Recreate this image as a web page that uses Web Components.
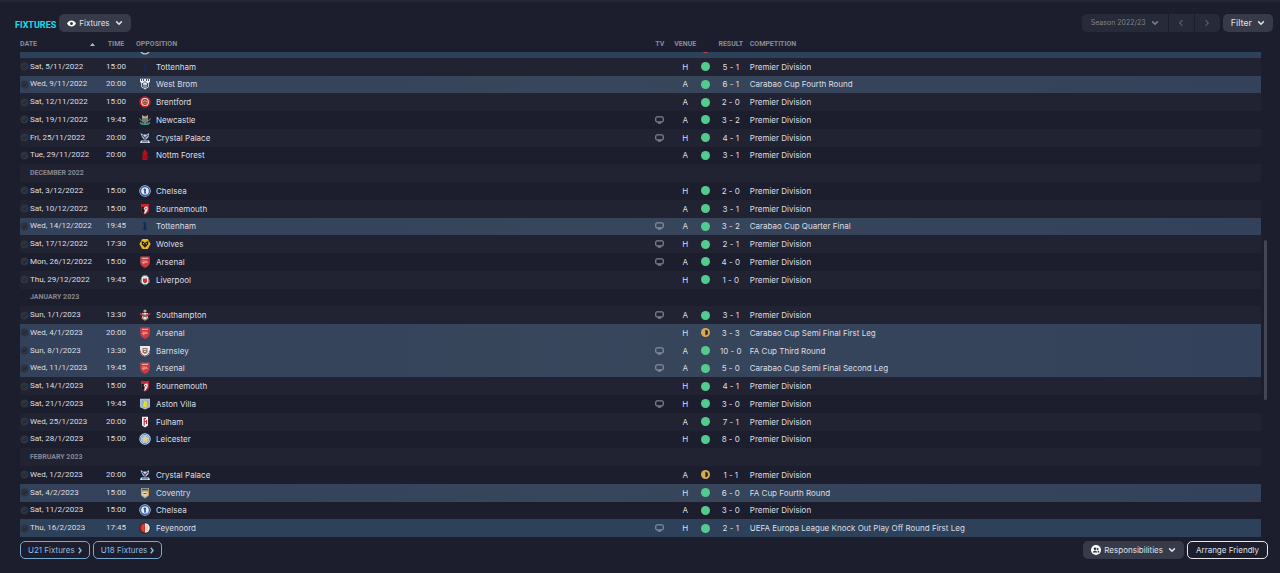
<!DOCTYPE html>
<html lang="en">
<head>
<meta charset="utf-8">
<title>Fixtures</title>
<style>
    html, body { height: 100%; }
    body {
        margin: 0;
        background: #1c1e2d;
        color: #dcdee4;
        font-family: Inter, "Liberation Sans", sans-serif;
        font-size: 8px;
        line-height: 12px;
    }
</style>
</head>
<body>
<fixtures-page></fixtures-page>

<script>
    const CHEVRON_DOWN = '<svg class="chev" viewBox="0 0 8 6" width="8" height="6"><path d="M1.2 1.4 4 4.2 6.8 1.4" fill="none" stroke="currentColor" stroke-width="1.5"/></svg>';

    const SHIELD = 'M1.5.8h9v5.700c0 2.500-2 4-4.500 5-2.500-1-4.500-2.500-4.500-5z';

    const CRESTS = {
        tottenham: '<circle cx="6" cy="8.800" r="1.700" fill="#17275c"/><path d="M5 7.500 4.800 4l-.8-.8 1.300-1.400 1.500.6-.4 1.200 1 2-1 2z" fill="#17275c"/>',
        westbrom: '<path d="M1 .8h10v3l-1 1v4L6 11.500 2 8.800v-4l-1-1z" fill="#eceef4"/><path d="M2.500 1v2M4.500 1v2M7.500 1v2M9.500 1v2" stroke="#1c2745" stroke-width=".8"/><path d="M3.300 5v4M5 6.500v3.800M7 6.500v3.800M8.700 5v4" stroke="#1c2745"/><path d="m4 5.500 2-2 2 2" fill="none" stroke="#3b5c50"/>',
        brentford: '<circle cx="6" cy="6" r="5.700" fill="#c3202c"/><circle cx="6" cy="6" r="3.900" fill="#efe2d8"/><circle cx="6" cy="6" r="2.900" fill="#a52a30"/><path d="M3.300 6c1-2 4.400-2 5.400 0-1 2-4.400 2-5.400 0z" fill="#e8bf63"/><path d="M4.300 6.200h3.400" stroke="#332024"/>',
        newcastle: '<path d="M3 1 6 2.500 9 1v4H3z" fill="#b7a67a"/><path d="M2 4.500h8v3L6 11 2 7.500z" fill="#2a3038"/><path d="M4 4.500v4M6 4.500V10M8 4.500v4" stroke="#e6e6e6" stroke-width=".8"/><path d="M.5 4.500 2.500 7M11.500 4.500 9.500 7" stroke="#998e72"/><path d="M1 8.500c2 2.600 8 2.600 10 0" fill="none" stroke="#37a58e" stroke-width="1.300"/>',
        palace: '<path d="m1.500 1 3.500 2 1-1 1 1 3-2-.5 4-2.500 2.500h-2L3 5z" fill="#cfd8e6"/><path d="m3 3 3 3 3-3" fill="none" stroke="#2763a5" stroke-width="1.300"/><path d="M6 5v4" stroke="#b62b3d"/><path d="M2 8.500h8l1 2.500H1z" fill="#dce3ed"/><path d="M3 9.800h6" stroke="#2763a5"/>',
        forest: '<path d="M6 .5c-1 1-2 1.500-1.600 2.500L3 4.500l1 .8L3.500 6.800h5L8 5.300l1-.8L7.500 3C8 2 7 1.500 6 .5z" fill="#b3101f"/><path d="M3.300 7h5.400v3.500c-1.500.8-3.900.8-5.400 0z" fill="#b3101f"/><path d="M4 8.700h4" stroke="#7c0b17" stroke-width=".8"/>',
        chelsea: '<circle cx="6" cy="6" r="5.700" fill="#cdd7e8"/><circle cx="6" cy="6" r="4.500" fill="none" stroke="#3a63a9" stroke-width="1.300"/><circle cx="6" cy="6" r="3.200" fill="#e8edf5"/><path d="M5.200 8.700V6L4.300 4.500 6 3.300l1.200 1.200L6.700 6l.5 2.500z" fill="#24509d"/>',
        bournemouth: '<path d="M2 1h8v5.500c0 2.500-1.500 4-4 5-2.500-1-4-2.500-4-5z" fill="#c22731"/><path d="M2.500 4v4.500L5.500 11V4z" fill="#1c1719"/><path d="M8.500 3.500 6 3.800l-1.500 1.700L6 7l-1 3.500 1 .3 2-2.500.8-2.300z" fill="#ece8e8"/><circle cx="6.800" cy="5.700" r=".6" fill="#241a1c"/>',
        wolves: '<path d="M3.300 1h5.400L11.600 6 8.700 11H3.300L.4 6z" fill="#efb81c"/><path d="m2.600 3 2 .8L6 5l1.400-1.200 2-.8-.3 3.500L6 9.800 2.900 6.500z" fill="#25221c"/><path d="M4 5.500 5.200 6M8 5.500 6.800 6" stroke="#f5dca0" stroke-width=".8"/>',
        arsenal: `<path d="${SHIELD}" fill="#d9343d" stroke="#a4525d" stroke-width=".6"/><path d="M3 2.300h6" stroke="#efc1bd"/><path d="M2.800 6.300h6M3.500 5l4.500.3" stroke="#eba79a" stroke-width=".9"/><circle cx="4.700" cy="7.300" r=".9" fill="#b7a4ae"/>`,
        liverpool: '<path d="M2.500 3.500c2-3 5-3 7 0V9L6 11.500 2.500 9z" fill="#e6ecea"/><path d="M3.300 2.500c1.500-1.500 3.900-1.500 5.400 0" fill="none" stroke="#37917c" stroke-width="1.200"/><path d="M4 4.500h4V8L6 9.500 4 8z" fill="#d02e3f"/><path d="M2 5.500v3M10 5.500v3" stroke="#de8d7c"/><path d="M4 10.500h4" stroke="#37917c"/>',
        southampton: '<path d="M3 4h6v4.500L6 11 3 8.500z" fill="#eee3df"/><path d="M4.200 4.500v4M7.800 4.500v4" stroke="#cc2836" stroke-width="1.200"/><circle cx="6" cy="2" r="1.600" fill="#c1a998"/><path d="M.8 4.500 4 6.500M11.200 4.500 8 6.500" stroke="#ad3940" stroke-width="1.500"/><path d="M5 5.500h2v2.500H5z" fill="#528467"/><path d="M2.500 9 6 11.300 9.500 9" fill="none" stroke="#b99c74"/>',
        barnsley: '<path d="M1 1h10v4.500C11 9 9 10.500 6 11.500 3 10.500 1 9 1 5.500z" fill="#ece9ea"/><path d="M1.300 5.500c0 3 1.800 4.600 4.700 5.600 2.900-1 4.700-2.600 4.700-5.600" fill="none" stroke="#c23e4c"/><path d="M3.500 3h5v4.500L6 9 3.500 7.500z" fill="#8a7568"/><path d="M4.500 4.500h3M5 6.500h2" stroke="#eee4c9"/>',
        villa: '<path d="M1 .8h10v8.500L6 11.500 1 9.300z" fill="#a9bfd2"/><path d="M2.500 2.500h7v6L6 10.200 2.500 8.500z" fill="#8eaac4"/><path d="M5 2.800l2.500.5.700 2-.7 1 .8 2L6 9.500 3.900 8.500l.6-3z" fill="#e4df25"/>',
        fulham: '<path d="M3 .8h6v8.700l-3 2-3-2z" fill="#f0efef"/><path d="M6.900 2.500H5.200v7M5.200 5.500h1.600M7.500 4v4" fill="none" stroke="#c52535" stroke-width="1.100"/>',
        leicester: '<circle cx="6" cy="6" r="5.700" fill="#d6e1ee"/><circle cx="6" cy="6" r="4.600" fill="none" stroke="#5b92d2"/><circle cx="6" cy="6" r="3.700" fill="#8db7e3"/><path d="m6 2.500 1.200 2 2.300.5L8 6.700l.4 2.300L6 8.200 3.600 9 4 6.700 2.500 5l2.300-.5z" fill="#e9cf83"/>',
        coventry: '<path d="M2 1h8v7.500L6 11.500 2 8.500z" fill="#a3a79d"/><path d="M3 2.500h6" stroke="#5e5241" stroke-width="1.500"/><path d="M3 5.500c2-1.500 4-1.500 6 0v2.500L6 10 3 8z" fill="#e0d1ad"/><path d="M4.500 6.500h3" stroke="#5c5b5b"/><path d="M9.500 2v6" stroke="#c19440"/>',
        feyenoord: '<circle cx="6" cy="6" r="5.500" fill="#211b20"/><path d="M6 1.200a4.800 4.800 0 0 0 0 9.600z" fill="#d92a21"/><path d="M6 1.200a4.800 4.800 0 0 1 0 9.600z" fill="#eee8e2"/><path d="M4 3v6M8 3v6" stroke="#b69b8c" stroke-width=".5"/>',
        round: '<circle cx="6" cy="6" r="5.500" fill="#c3c6cc"/><circle cx="6" cy="6" r="4.300" fill="#2b3140"/>'
    };

    // kind, date, time, club, crest, on tv, venue, outcome, result, competition
    const PD = "Premier Division";
    const FIXTURES = [
        ["europe", "", "", "", "round", 0, "", "loss", "", ""],
        ["", "Sat, 5/11/2022", "15:00", "Tottenham", "tottenham", 0, "H", "win", "5 - 1", PD],
        ["cup", "Wed, 9/11/2022", "20:00", "West Brom", "westbrom", 0, "A", "win", "6 - 1", "Carabao Cup Fourth Round"],
        ["", "Sat, 12/11/2022", "15:00", "Brentford", "brentford", 0, "A", "win", "2 - 0", PD],
        ["", "Sat, 19/11/2022", "19:45", "Newcastle", "newcastle", 1, "A", "win", "3 - 2", PD],
        ["", "Fri, 25/11/2022", "20:00", "Crystal Palace", "palace", 1, "H", "win", "4 - 1", PD],
        ["", "Tue, 29/11/2022", "20:00", "Nottm Forest", "forest", 0, "A", "win", "3 - 1", PD],
        ["December 2022"],
        ["", "Sat, 3/12/2022", "15:00", "Chelsea", "chelsea", 0, "H", "win", "2 - 0", PD],
        ["", "Sat, 10/12/2022", "15:00", "Bournemouth", "bournemouth", 0, "A", "win", "3 - 1", PD],
        ["cup", "Wed, 14/12/2022", "19:45", "Tottenham", "tottenham", 1, "A", "win", "3 - 2", "Carabao Cup Quarter Final"],
        ["", "Sat, 17/12/2022", "17:30", "Wolves", "wolves", 1, "H", "win", "2 - 1", PD],
        ["", "Mon, 26/12/2022", "15:00", "Arsenal", "arsenal", 1, "A", "win", "4 - 0", PD],
        ["", "Thu, 29/12/2022", "19:45", "Liverpool", "liverpool", 0, "H", "win", "1 - 0", PD],
        ["January 2023"],
        ["", "Sun, 1/1/2023", "13:30", "Southampton", "southampton", 1, "A", "win", "3 - 1", PD],
        ["cup", "Wed, 4/1/2023", "20:00", "Arsenal", "arsenal", 0, "H", "draw", "3 - 3", "Carabao Cup Semi Final First Leg"],
        ["cup", "Sun, 8/1/2023", "13:30", "Barnsley", "barnsley", 1, "A", "win", "10 - 0", "FA Cup Third Round"],
        ["cup", "Wed, 11/1/2023", "19:45", "Arsenal", "arsenal", 1, "A", "win", "5 - 0", "Carabao Cup Semi Final Second Leg"],
        ["", "Sat, 14/1/2023", "15:00", "Bournemouth", "bournemouth", 0, "H", "win", "4 - 1", PD],
        ["", "Sat, 21/1/2023", "19:45", "Aston Villa", "villa", 1, "H", "win", "3 - 0", PD],
        ["", "Wed, 25/1/2023", "20:00", "Fulham", "fulham", 0, "A", "win", "7 - 1", PD],
        ["", "Sat, 28/1/2023", "15:00", "Leicester", "leicester", 0, "H", "win", "8 - 0", PD],
        ["February 2023"],
        ["", "Wed, 1/2/2023", "20:00", "Crystal Palace", "palace", 0, "A", "draw", "1 - 1", PD],
        ["cup", "Sat, 4/2/2023", "15:00", "Coventry", "coventry", 0, "H", "win", "6 - 0", "FA Cup Fourth Round"],
        ["", "Sat, 11/2/2023", "15:00", "Chelsea", "chelsea", 0, "A", "win", "3 - 0", PD],
        ["europe", "Thu, 16/2/2023", "17:45", "Feyenoord", "feyenoord", 1, "H", "win", "2 - 1", "UEFA Europa League Knock Out Play Off Round First Leg"]
    ];

    class ClubCrest extends HTMLElement {
        constructor() {
            super();
            this.attachShadow({ mode: 'open' });
        }
        connectedCallback() {
            this.shadowRoot.innerHTML = `
                <style>
                    :host { display: block; width: 12px; height: 12px; }
                    svg { display: block; }
                </style>
                <svg viewBox="0 0 12 12" width="12" height="12" aria-hidden="true">${CRESTS[this.getAttribute("club")]}</svg>
            `;
        }
    }
    customElements.define("club-crest", ClubCrest);

    class ResultDot extends HTMLElement {
        constructor() {
            super();
            this.attachShadow({ mode: 'open' });
            this.shadowRoot.innerHTML = `
                <style>
                    :host { display: block; width: 9px; height: 9px; margin: 0 auto; border-radius: 50%; background: #52cb8d; }
                    :host([outcome="loss"]) { background: #d5424d; }
                    :host([outcome="draw"]) { background: #dbaa50; }
                    svg { display: none; }
                    :host([outcome="draw"]) svg { display: block; }
                </style>
                <svg viewBox="0 0 9 9" width="9" height="9" aria-hidden="true"><path d="M4.300 1.800a2.700 2.700 0 0 1 0 5.400z" fill="#2a2a33"/></svg>
            `;
        }
    }
    customElements.define("result-dot", ResultDot);

    class FmButton extends HTMLElement {
        constructor() {
            super();
            this.attachShadow({ mode: 'open' });
            this.shadowRoot.innerHTML = `
                <style>
                    :host { display: block; }
                    button {
                        display: flex; align-items: center; gap: 3px;
                        box-sizing: border-box; height: 18px; padding: 0 8px;
                        border: 0; border-radius: 5px;
                        background: #373a48; color: #dfe1e8;
                        font: inherit; line-height: 12px; white-space: nowrap;
                    }
                    :host([large]) button { font-size: 9px; }
                    :host([kind="link"]) button { padding: 0 7px; background: none; border: 1px solid #78a9d1; color: #8dbbe0; }
                    :host([kind="outline"]) button { background: none; border: 1px solid #e6e8ee; }
                    ::slotted(svg), svg { display: block; flex: none; }
                    .chev, .next { display: none; }
                    :host([menu]) .chev { display: block; margin-left: 2px; }
                    :host([kind="link"]) .next { display: block; }
                </style>
                <button type="button">
                    <slot name="icon"></slot><slot></slot>
                    ${CHEVRON_DOWN}
                    <svg class="next" viewBox="0 0 4 7" width="4" height="7"><path d="M.8.8 3 3.500.8 6.200" fill="none" stroke="currentColor" stroke-width="1.400"/></svg>
                </button>
            `;
        }
    }
    customElements.define("fm-button", FmButton);

    class SeasonPicker extends HTMLElement {
        constructor() {
            super();
            this.attachShadow({ mode: 'open' });
            this.shadowRoot.innerHTML = `
                <style>
                    :host { display: flex; height: 18px; border-radius: 5px; overflow: hidden; background: #272a38; color: #7f828e; font-size: 7px; }
                    label { display: flex; align-items: center; padding-right: 9px; }
                    select { appearance: none; width: 69px; height: 18px; padding: 0 0 0 9px; border: 0; background: none; color: inherit; font: inherit; }
                    button { display: grid; place-items: center; width: 26px; padding: 0; border: 0; border-left: 1px solid #1c1e2d; background: none; color: #595c69; }
                    svg { display: block; }
                </style>
                <label><select aria-label="Season"><option>Season 2022/23</option></select>${CHEVRON_DOWN}</label>
                <button type="button" aria-label="Previous season"><svg viewBox="0 0 6 8" width="6" height="8"><path d="M4.500 1.200 1.700 4l2.800 2.800" fill="none" stroke="currentColor" stroke-width="1.200"/></svg></button>
                <button type="button" aria-label="Next season"><svg viewBox="0 0 6 8" width="6" height="8"><path d="M1.500 1.200 4.300 4 1.500 6.800" fill="none" stroke="currentColor" stroke-width="1.200"/></svg></button>
            `;
        }
    }
    customElements.define("season-picker", SeasonPicker);

    class FixtureTable extends HTMLElement {
        constructor() {
            super();
            this.attachShadow({ mode: 'open' });
            this.shadowRoot.innerHTML = `
                <style>
                    :host { display: flex; }
                    .list { display: flex; flex-direction: column; flex: 1; min-width: 0; }
                    .scroller { flex: 1; min-height: 0; overflow: hidden; }
                    table { width: 100%; table-layout: fixed; border-collapse: separate; border-spacing: 0; }
                    .scroller table { height: calc(100% + 12px); }
                    th, td { box-sizing: border-box; padding: 0; text-align: center; white-space: nowrap; font-weight: 400; }
                    thead th { height: 16px; color: #898b96; font-family: Roboto, "Liberation Sans", sans-serif; font-size: 7px; font-weight: 700; text-transform: uppercase; }
                    .left { text-align: left; }
                    .club.left { padding-left: 2px; }
                    .date { width: 78px; }
                    .time { width: 36px; }
                    .club { width: 41.4%; }
                    .tv { width: 24px; }
                    .venue { width: 27px; }
                    .dot { width: 13px; }
                    .result { width: 38px; }
                    tbody tr:nth-child(odd) { background: #1c1e2d; }
                    tbody tr:nth-child(even) { background: #212332; }
                    tbody tr.cup { background: linear-gradient(90deg, #33415a, #38465c 45%, #33415a); }
                    tbody tr.europe { background: #2e415a; }
                    td { line-height: 12px; }
                    .when { font-family: Roboto, "Liberation Sans", sans-serif; }
                    .month { padding-left: 10px; color: #858792; font-family: Roboto, "Liberation Sans", sans-serif; font-size: 7px; font-weight: 700; text-align: left; text-transform: uppercase; }
                    .cell { display: flex; align-items: center; }
                    .date-cell { gap: 1px; }
                    .club-cell { gap: 5px; padding-left: 5px; }
                    .sort { display: flex; justify-content: space-between; align-items: center; padding-right: 3px; }
                    svg { display: block; }
                    .tv svg { margin: 0 auto; }
                    .track { display: flex; flex-direction: column; width: 3px; margin: 16px 0 0 3px; }
                    .track::before { content: ""; flex: 188; }
                    .thumb { flex: 160; border-radius: 2px; background: #444753; }
                    .track::after { content: ""; flex: 137; }
                </style>
                <div class="list">
                    <table>
                        <thead><tr>
                            <th class="date left" aria-sort="ascending"><div class="sort">Date<svg viewBox="0 0 5 3" width="5" height="3"><path d="M0 3 2.500 0 5 3z" fill="#b9bbc4"/></svg></div></th>
                            <th class="time">Time</th>
                            <th class="club left">Opposition</th>
                            <th class="tv">TV</th>
                            <th class="venue">Venue</th>
                            <th class="dot"></th>
                            <th class="result">Result</th>
                            <th class="left">Competition</th>
                        </tr></thead>
                    </table>
                    <div class="scroller">
                        <table aria-label="Fixtures">
                            <colgroup><col class="date"><col class="time"><col class="club"><col class="tv"><col class="venue"><col class="dot"><col class="result"><col></colgroup>
                            <tbody>${FIXTURES.map(f => this.row(f)).join("")}</tbody>
                        </table>
                    </div>
                </div>
                <div class="track"><div class="thumb"></div></div>
            `;
        }

        row(f) {
            if (f.length == 1) return `<tr><td class="month" colspan="8">${f[0]}</td></tr>`;
            const [kind, date, time, club, crest, tv, venue, outcome, result, comp] = f;
            return `
                <tr class="${kind}">
                    <td class="when"><div class="cell date-cell">
                        <svg viewBox="0 0 9 9" width="9" height="9" aria-hidden="true"><circle cx="4.500" cy="4.500" r="4" fill="#2f333f"/><path d="M2.500 4.700 4 6l2.700-3" fill="none" stroke="#20232f"/></svg>
                        <span>${date}</span>
                    </div></td>
                    <td class="when">${time}</td>
                    <td><div class="cell club-cell"><club-crest club="${crest}"></club-crest><span>${club}</span></div></td>
                    <td class="tv">${tv ? '<svg viewBox="0 0 9 8" width="9" height="8" role="img" aria-label="On TV"><rect x=".8" y=".9" width="7.400" height="5" rx=".8" fill="none" stroke="#a4a8b3" stroke-width=".9"/><path d="M2.800 7h3.400" stroke="#a4a8b3"/></svg>' : ""}</td>
                    <td>${venue}</td>
                    <td><result-dot outcome="${outcome}"></result-dot></td>
                    <td>${result}</td>
                    <td class="left">${comp}</td>
                </tr>`;
        }

        connectedCallback() {
            this.shadowRoot.querySelector(".scroller").scrollTop = 12;
        }
    }
    customElements.define("fixture-table", FixtureTable);

    class FixturesPage extends HTMLElement {
        constructor() {
            super();
            this.attachShadow({ mode: 'open' });
            this.shadowRoot.innerHTML = `
                <style>
                    :host { display: flex; flex-direction: column; box-sizing: border-box; height: 100vh; border-top: 2px solid #242735; }
                    header { display: flex; align-items: center; gap: 3px; height: 34px; box-sizing: border-box; padding: 8px 7px 0 15px; }
                    h1 { margin: 0; padding-top: 3px; color: #0ee0ec; font-family: Roboto, "Liberation Sans", sans-serif; font-size: 9px; line-height: 12px; font-weight: 700; }
                    .push { flex: 1; }
                    fixture-table { flex: 1; min-height: 0; padding: 0 13px 0 20px; }
                    footer { display: flex; gap: 3px; height: 36px; box-sizing: border-box; padding: 4px 12px 0 20px; }
                </style>
                <header>
                    <h1>FIXTURES</h1>
                    <fm-button menu>
                        <svg slot="icon" viewBox="0 0 9 7" width="9" height="7"><path d="M0 3.500C2-.5 7-.5 9 3.500 7 7.500 2 7.500 0 3.500z" fill="#fff"/><circle cx="4.500" cy="3.500" r="1.500" fill="#373a48"/></svg>
                        Fixtures
                    </fm-button>
                    <span class="push"></span>
                    <season-picker></season-picker>
                    <fm-button menu large>Filter</fm-button>
                </header>
                <fixture-table></fixture-table>
                <footer>
                    <fm-button kind="link">U21 Fixtures</fm-button>
                    <fm-button kind="link">U18 Fixtures</fm-button>
                    <span class="push"></span>
                    <fm-button menu>
                        <svg slot="icon" viewBox="0 0 10 10" width="10" height="10"><circle cx="5" cy="5" r="5" fill="#fff"/><circle cx="4" cy="3.700" r="1.300" fill="#30333f"/><path d="M1.800 7.500c.2-2.500 4.200-2.500 4.400 0z" fill="#30333f"/><circle cx="6.600" cy="4" r="1" fill="#30333f"/><path d="M6.600 5.500c1 0 1.800.8 1.800 2H6.800z" fill="#30333f"/></svg>
                        Responsibilities
                    </fm-button>
                    <fm-button kind="outline">Arrange Friendly</fm-button>
                </footer>
            `;
        }
    }
    customElements.define("fixtures-page", FixturesPage);
</script>
</body>
</html>
